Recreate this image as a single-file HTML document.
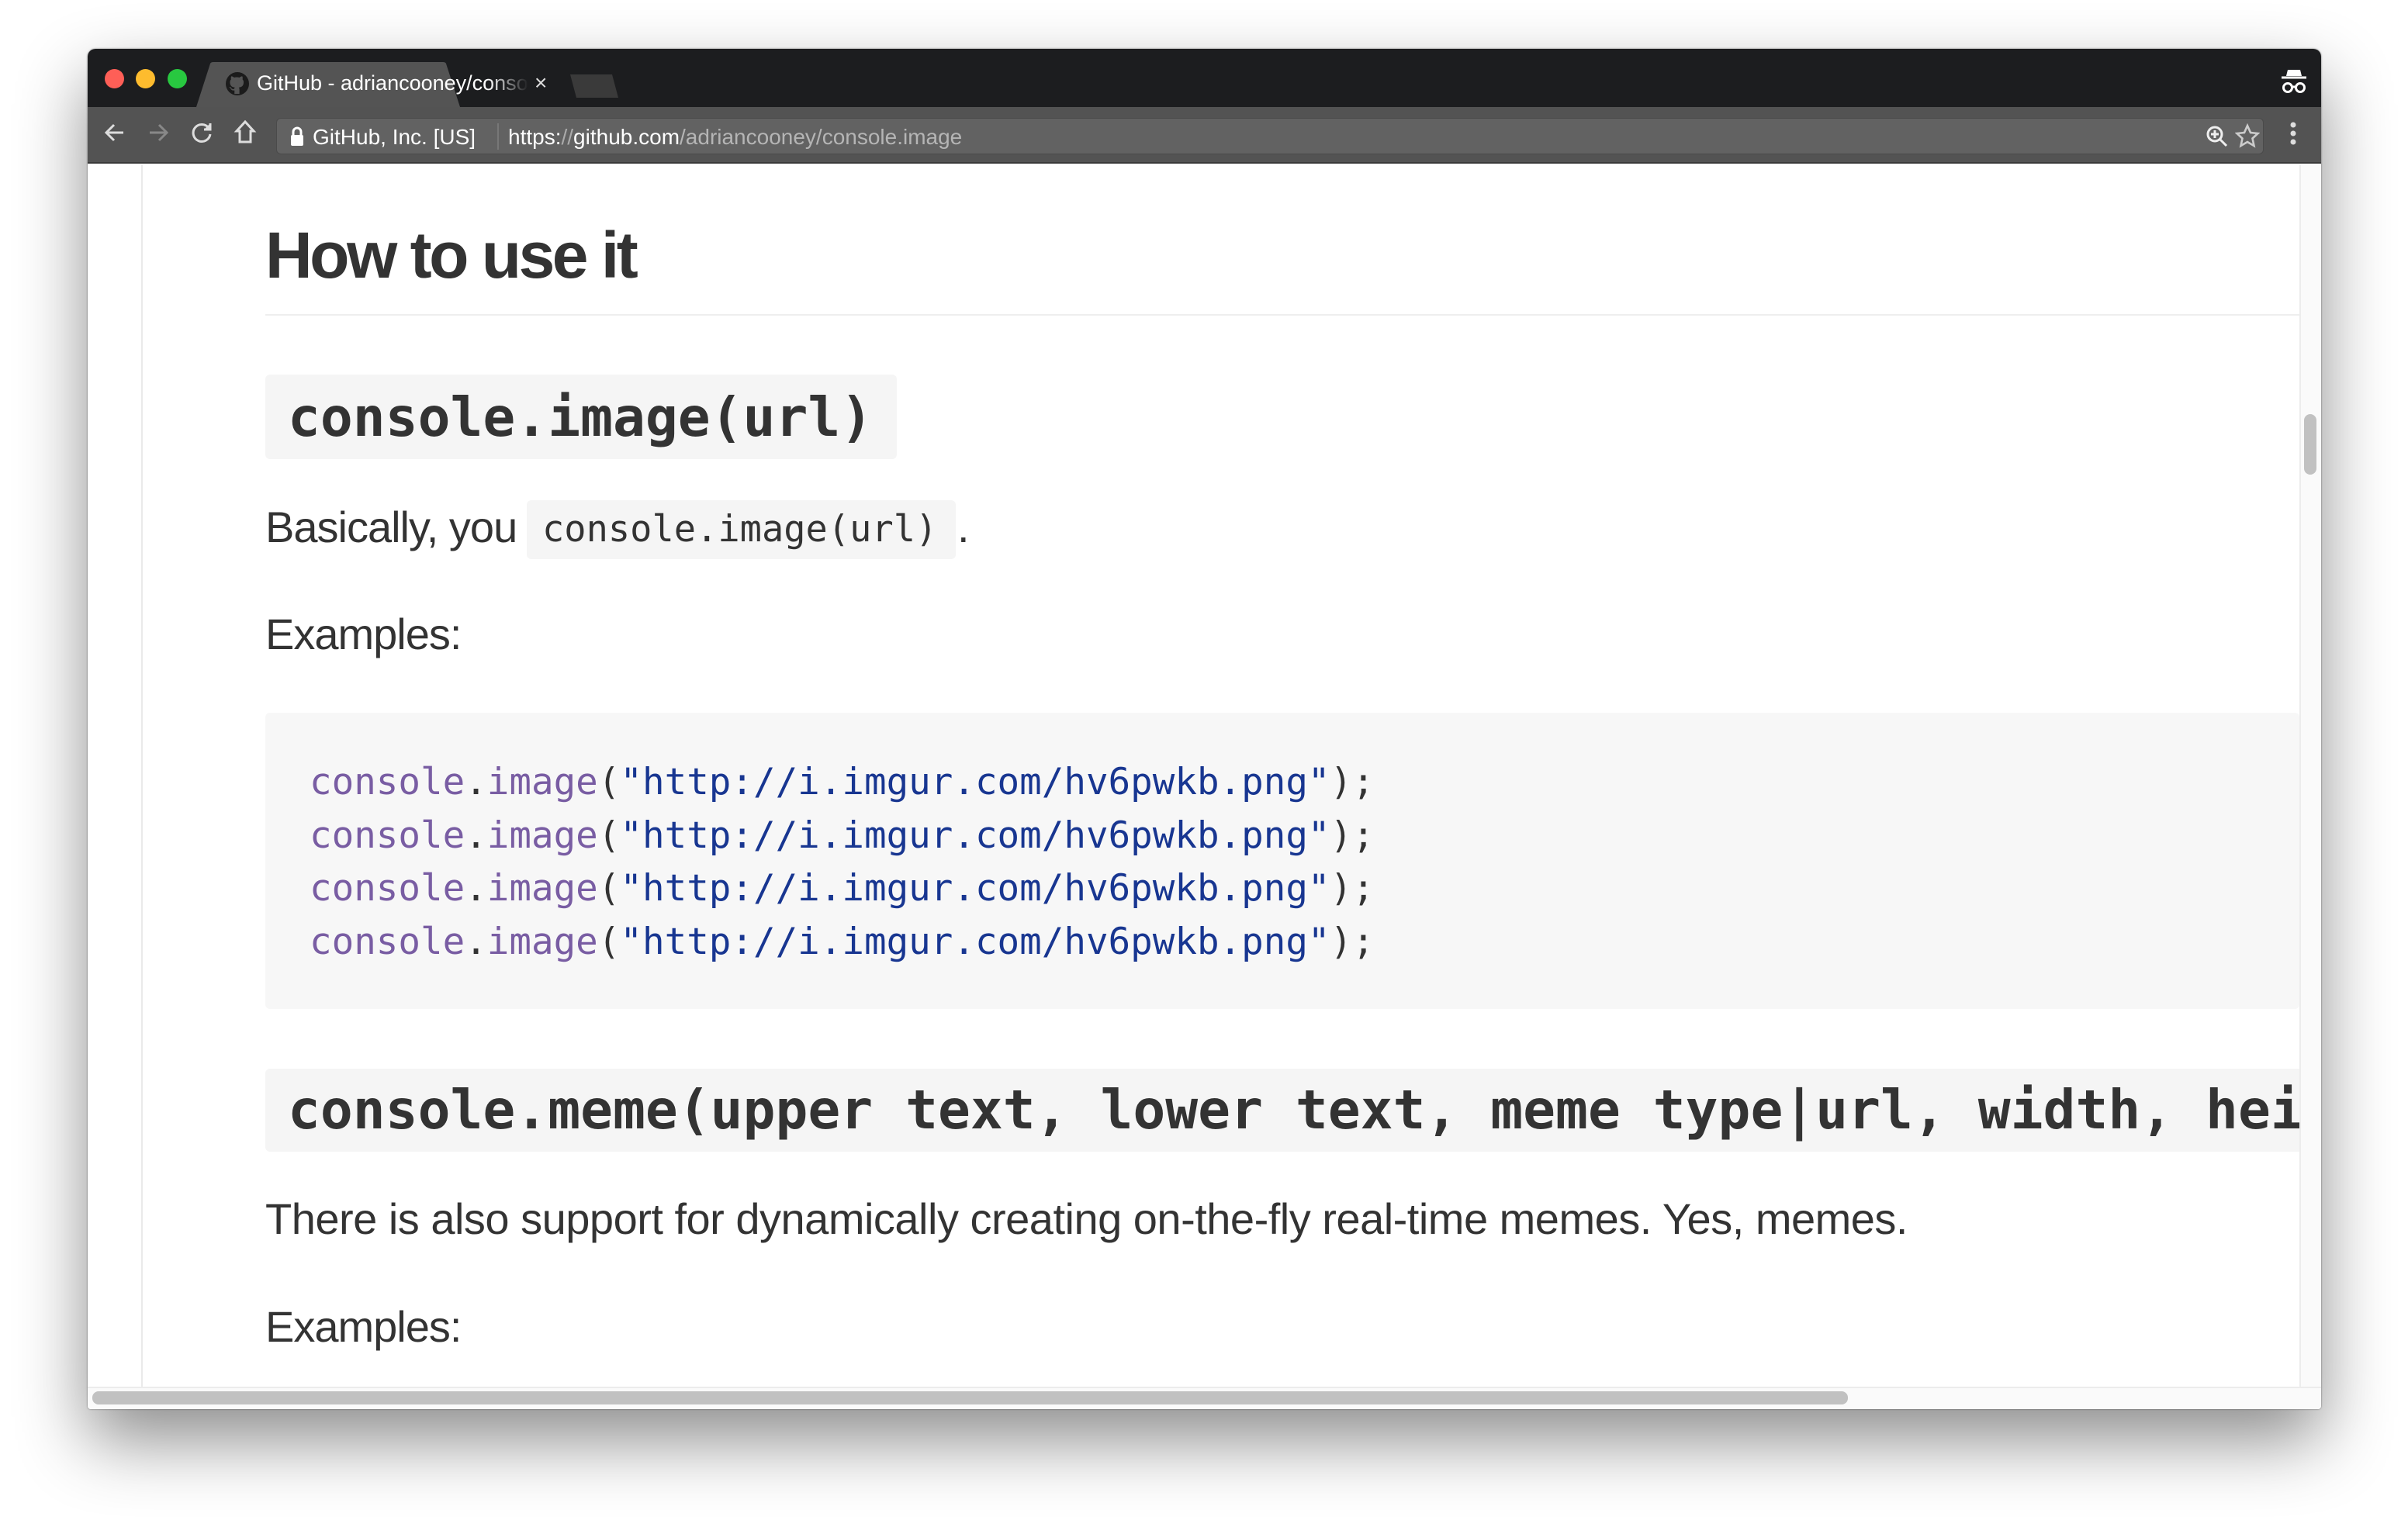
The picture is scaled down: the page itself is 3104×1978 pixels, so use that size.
<!DOCTYPE html>
<html><head><meta charset="utf-8"><style>
*{margin:0;padding:0;box-sizing:border-box}
body{width:3104px;height:1978px;background:#fff;position:relative;overflow:hidden;font-family:"Liberation Sans",sans-serif}
.win{position:absolute;left:113px;top:63px;width:2879px;height:1754px;border-radius:10px 10px 4px 4px;overflow:hidden;background:#fff;box-shadow:0 40px 90px rgba(0,0,0,.45),0 0 2px rgba(0,0,0,.5)}
.abs{position:absolute}
.tabbar{left:0;top:0;width:100%;height:75px;background:#1c1d1f}
.toolbar{left:0;top:75px;width:100%;height:73px;background:#535353;border-bottom:2px solid #3a3a3a}
.dot{width:25px;height:25px;border-radius:50%;top:26px}
.omni{left:243px;top:14px;width:2562px;height:47px;background:#626262;border:1px solid #4a4a4a;border-radius:6px}
.t{white-space:nowrap;color:#333}
.mono{font-family:"DejaVu Sans Mono","Liberation Mono",monospace}
.p{font-size:56px;letter-spacing:-1px}
.pu{color:#795da3}.bl{color:#183691}
</style></head><body>
<div class="win">
 <div class="abs tabbar">
  <div class="abs dot" style="left:22px;background:#fe5f57"></div>
  <div class="abs dot" style="left:62px;background:#febc2e"></div>
  <div class="abs dot" style="left:103px;background:#28c840"></div>
  <svg class="abs" style="left:140px;top:17px" width="360" height="58"><path d="M0 58 L18 2 Q19 0 22 0 L318 0 Q321 0 322 2 L340 58 Z" fill="#545454"/></svg>
  <svg class="abs" style="left:178px;top:30px" width="30" height="30" viewBox="0 0 16 16"><circle cx="8" cy="8" r="8" fill="#1b1b1b"/><path d="M6 15v-2.5c-2 .4-2.5-1-2.5-1-.4-.8-.8-1-.8-1-.7-.4 0-.4 0-.4.7 0 1.1.8 1.1.8.6 1 1.6.8 2 .6.1-.5.3-.8.5-1-1.7-.2-3.4-.8-3.4-3.6 0-.8.3-1.5.8-2-.1-.2-.3-1 .1-2 0 0 .6-.2 2 .8a7 7 0 013.6 0c1.4-1 2-.8 2-.8.4 1 .2 1.8.1 2 .5.5.8 1.2.8 2 0 2.8-1.7 3.4-3.4 3.6.3.2.5.7.5 1.4V15" fill="#555"/></svg>
  <div class="abs t" style="left:218px;top:29px;font-size:27px;color:#fff;width:350px;overflow:hidden;-webkit-mask-image:linear-gradient(90deg,#000 85%,transparent)">GitHub - adriancooney/console.image</div>
  <div class="abs t" style="left:576px;top:28px;font-size:28px;color:#ddd">×</div>
  <svg class="abs" style="left:622px;top:33px" width="64" height="32"><path d="M0 0 L54 0 L62 30 L8 30 Z" fill="#3a3a3a"/></svg>
  <svg class="abs" style="left:2826px;top:24px" width="36" height="36" viewBox="0 0 36 36" fill="none" stroke="#fff" stroke-width="3"><path d="M10 3h16l2 8H8z" fill="#fff" stroke="none"/><path d="M2 13h32"/><circle cx="10" cy="26" r="5.5"/><circle cx="26" cy="26" r="5.5"/><path d="M15.5 25h5"/></svg>
 </div>
 <div class="abs toolbar">
  <svg class="abs" style="left:20px;top:18px" width="30" height="30" viewBox="0 0 30 30" fill="none" stroke="#ddd" stroke-width="3"><path d="M26 15H5M14 5L4 15l10 10"/></svg>
  <svg class="abs" style="left:76px;top:18px" width="30" height="30" viewBox="0 0 30 30" fill="none" stroke="#888" stroke-width="3"><path d="M4 15h21M16 5l10 10-10 10"/></svg>
  <svg class="abs" style="left:132px;top:18px" width="30" height="30" viewBox="0 0 30 30" fill="none" stroke="#ddd" stroke-width="3"><path d="M24 9A11 11 0 1 0 26 17"/><path d="M26 3v8h-8" fill="#ddd"/></svg>
  <svg class="abs" style="left:188px;top:16px" width="30" height="32" viewBox="0 0 30 32" fill="none" stroke="#ddd" stroke-width="3"><path d="M4 15L15 3l11 12h-4v14H8V15z"/></svg>
  <div class="abs omni">
   <svg class="abs" style="left:16px;top:10px" width="20" height="26" viewBox="0 0 20 26"><path d="M5 11V7a5 5 0 0110 0v4" fill="none" stroke="#fff" stroke-width="3"/><rect x="2" y="11" width="16" height="14" rx="2" fill="#fff"/></svg>
   <div class="abs t" style="left:46px;top:8px;font-size:28px;color:#fff">GitHub, Inc. [US]</div>
   <div class="abs" style="left:284px;top:6px;width:2px;height:34px;background:#777"></div>
   <div class="abs t" style="left:298px;top:8px;font-size:28px;color:#fff">https:<span style="color:#aaa">//</span>github.com<span style="color:#b5b5b5">/adriancooney/console.image</span></div>
   <svg class="abs" style="left:2486px;top:8px" width="30" height="30" viewBox="0 0 30 30" fill="none" stroke="#eee" stroke-width="3"><circle cx="12" cy="12" r="9"/><path d="M19 19l8 8M12 7v10M7 12h10"/></svg>
   <svg class="abs" style="left:2524px;top:6px" width="32" height="32" viewBox="0 0 32 32" fill="none" stroke="#ccc" stroke-width="2.6"><path d="M16 3l4 9 9.5 1-7 6.5 2 9.5L16 24l-8.5 5 2-9.5-7-6.5 9.5-1z"/></svg>
  </div>
  <svg class="abs" style="left:2836px;top:18px" width="14" height="36"><circle cx="7" cy="5" r="3.5" fill="#ddd"/><circle cx="7" cy="16" r="3.5" fill="#ddd"/><circle cx="7" cy="27" r="3.5" fill="#ddd"/></svg>
 </div>
 <!-- content -->
 <div class="abs" style="left:69px;top:150px;width:2px;height:1575px;background:#eaeaea"></div>
 <div class="abs t" style="left:229px;top:224px;font-size:84px;font-weight:bold;letter-spacing:-3.5px;line-height:1">How to use it</div>
 <div class="abs" style="left:229px;top:342px;width:2622px;height:2px;background:#eee"></div>
 <div class="abs" style="left:229px;top:420px;width:814px;height:109px;background:#f5f5f5;border-radius:6px"></div>
 <div class="abs t mono" style="left:258px;top:433px;font-size:69.6px;font-weight:bold;line-height:85px">console.image(url)</div>
 <div class="abs t p" style="left:229px;top:584px;line-height:66px">Basically, you</div>
 <div class="abs" style="left:566px;top:582px;width:553px;height:76px;background:#f5f5f5;border-radius:6px"></div>
 <div class="abs t mono" style="left:586px;top:590px;font-size:47px;line-height:60px">console.image(url)</div>
 <div class="abs t p" style="left:1121px;top:584px;line-height:66px">.</div>
 <div class="abs t p" style="left:229px;top:722px;line-height:66px">Examples:</div>
 <div class="abs" style="left:229px;top:856px;width:2622px;height:382px;background:#f7f7f7;border-radius:6px"></div>
 <div class="abs t mono" style="left:286px;top:912px;font-size:47.5px;line-height:68.5px">
  <div><span class="pu">console</span>.<span class="pu">image</span>(<span class="bl">"http://i.imgur.com/hv6pwkb.png"</span>);</div>
  <div><span class="pu">console</span>.<span class="pu">image</span>(<span class="bl">"http://i.imgur.com/hv6pwkb.png"</span>);</div>
  <div><span class="pu">console</span>.<span class="pu">image</span>(<span class="bl">"http://i.imgur.com/hv6pwkb.png"</span>);</div>
  <div><span class="pu">console</span>.<span class="pu">image</span>(<span class="bl">"http://i.imgur.com/hv6pwkb.png"</span>);</div>
 </div>
 <div class="abs" style="left:229px;top:1315px;width:2622px;height:107px;background:#f5f5f5;border-radius:6px 0 0 6px;overflow:hidden">
  <div class="abs t mono" style="left:29px;top:11px;font-size:69.6px;font-weight:bold;line-height:85px">console.meme(upper text, lower text, meme type|url, width, height)</div>
 </div>
 <div class="abs t p" style="left:229px;top:1476px;line-height:66px;letter-spacing:-0.5px">There is also support for dynamically creating on-the-fly real-time memes. Yes, memes.</div>
 <div class="abs t p" style="left:229px;top:1615px;line-height:66px">Examples:</div>
 <!-- scrollbars -->
 <div class="abs" style="left:2851px;top:150px;width:28px;height:1575px;background:#fafafa;border-left:2px solid #ececec"></div>
 <div class="abs" style="left:2857px;top:471px;width:16px;height:78px;border-radius:8px;background:#c1c1c1"></div>
 <div class="abs" style="left:0;top:1725px;width:2879px;height:29px;background:#fafafa;border-top:2px solid #ececec"></div>
 <div class="abs" style="left:6px;top:1731px;width:2263px;height:17px;border-radius:8px;background:#c1c1c1"></div>
</div>
</body></html>
